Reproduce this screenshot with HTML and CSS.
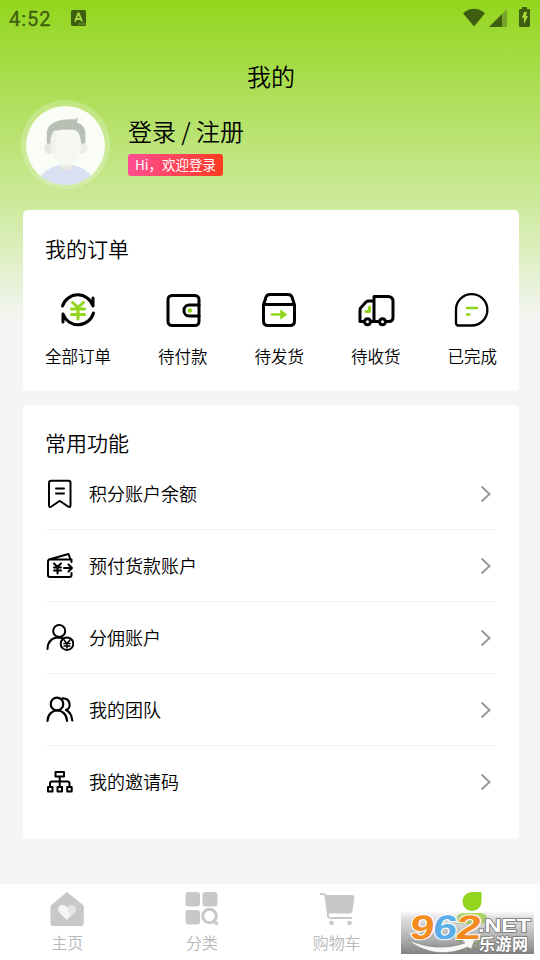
FILE: index.html
```html
<!DOCTYPE html>
<html lang="zh-CN">
<head>
<meta charset="utf-8">
<title>我的</title>
<link rel="stylesheet" href="styles.css">
</head>
<body>
<div class="screen">
  <header class="status">
    <span class="clock">4:52</span>
    <svg class="status-app" width="15" height="16" viewBox="0 0 15 16"><rect width="15" height="16" rx="1.5" fill="#3f5f10"/><path d="M4 11.5 7.2 3.5h.6L11 11.5M5.2 9h4.6" fill="none" stroke="#a3dc3e" stroke-width="1.8"/><path d="M8 14h1.3M10.3 14h1.3M12.5 14h1.3" stroke="#a3dc3e" stroke-width="1.2"/></svg>
    <svg class="status-icons" width="68" height="21" viewBox="0 0 68 21"><path d="M0 6.2Q11-2.5 22 6.2L11 19.5Z" fill="#3f5f10"/><path d="M26 20 39 7V20Z" fill="#3f5f10"/><path d="M39 7 44 2V20H39Z" fill="#76a42a"/><path d="M59 0h5v2h2a1 1 0 0 1 1 1v16a1 1 0 0 1-1 1h-9a1 1 0 0 1-1-1V3a1 1 0 0 1 1-1h2Z" fill="#3f5f10"/><path d="M61 5h3l-1 4h2l-4 8v-6h-2Z" fill="#a0da36"/></svg>
  </header>
  <h1 class="title">我的</h1>
  <section class="profile">
    <div class="avatar">
      <svg width="80" height="80" viewBox="0 0 80 80"><defs><clipPath id="face"><circle cx="40" cy="40" r="40"/></clipPath></defs><circle cx="40" cy="40" r="40" fill="#fafdf5"/><g clip-path="url(#face)"><path d="M14 72Q22 62 33 60H48Q60 62 67 72L60 80H20Z" fill="#d9e0f2"/><path d="M34 54h13v9q-6.500 5-13 0Z" fill="#e6e8e1"/><circle cx="24" cy="43" r="5.500" fill="#e5e8e1"/><circle cx="57" cy="43" r="5.500" fill="#eceee8"/><path d="M21 38V26Q22 19 31 15.500 36 13 50 13.500L52 11V17Q59 19 60 26V38H54L46 24H34L26 38Z" fill="#babfb5"/><path d="M25 39V34Q26 25 31 24.500 36 26 41 25 48 23 51 25 55 27 56 39 54 60 41 60.500 28 60 25 39Z" fill="#f6f8f3"/><path d="M25 39V34Q26 28 30 26V54Q26 48 25 39Z" fill="#eff2eb"/></g></svg>
    </div>
    <div class="who">
      <div class="login">登录 / 注册</div>
      <div class="welcome">Hi，欢迎登录</div>
    </div>
  </section>

  <section class="card orders">
    <h2>我的订单</h2>
    <div class="order-list">
      <div class="order"><svg width="36" height="36" viewBox="0 0 36 36"><g class="ln"><path d="M2.500 14A16 16 0 0 1 33 14V6M33.500 21A16 16 0 0 1 3 22V30"/></g><path class="gr heavy" d="m12.500 10.500 5.500 5 5.500-5M11.500 17h13M11.500 22.500h13M18 16v11"/></svg><span>全部订单</span></div>
      <div class="order"><svg width="36" height="36" viewBox="0 0 36 36"><g class="ln"><rect x="3" y="3.500" width="31" height="30" rx="4"/><path d="M34 13h-10a5 5 0 0 0-5 5v1a5 5 0 0 0 5 5h10"/></g><circle cx="25" cy="18.500" r="2.300" fill="#91d51c"/></svg><span>待付款</span></div>
      <div class="order"><svg width="36" height="36" viewBox="0 0 36 36"><g class="ln"><path d="M2.500 13 5 5q1-2.500 4-2.500H27q3 0 4 2.500l2.500 8v16q0 4.500-4.500 4.500H7q-4.500 0-4.500-4.500ZM2.500 12.500h31"/></g><path class="gr" d="M11 22.500h13"/><path d="m20 18.500 5 4-5 4Z" fill="#91d51c" stroke="#91d51c" stroke-width="1.500" stroke-linejoin="round"/></svg><span>待发货</span></div>
      <div class="order"><svg width="38" height="36" viewBox="0 0 38 36"><g class="ln"><path d="M6 29.500H3V18q0-2 1.500-3L9 10Q10 9 12 9H17V29.500H14M17 29.500V4.500H31q5 0 5 5V25q0 4.500-4 4.500H29M14 29.500h7"/><circle cx="10.500" cy="29.800" r="3"/><circle cx="25.500" cy="29.800" r="3"/></g><path class="gr heavy" d="M12.500 15V19.500H9"/></svg><span>待收货</span></div>
      <div class="order"><svg width="36" height="36" viewBox="0 0 36 36"><path class="ln thin" d="M2 18A15.700 15.700 0 1 1 17.700 33.500H4.500Q2 33.500 2 31Z"/><path class="gr" d="M13 16h10M13 22.500h2.500"/></svg><span>已完成</span></div>
    </div>
  </section>

  <section class="card features">
    <h2>常用功能</h2>
    <div class="row"><svg class="ic" width="28" height="30" viewBox="0 0 28 30"><path d="M3 27V4q0-2.200 2.200-2.200H22.300q2.200 0 2.200 2.200V26q0 3-2.500 1.500L14.700 22.500q-1-.8-2 0L5.500 27.500Q3 29 3 26.500M10 9.500h8M10 14.500h8"/></svg><span>积分账户余额</span><svg class="chev" width="11" height="18" viewBox="0 0 11 18"><path d="m1.500 1.500 8 7.500-8 7.500"/></svg></div>
    <div class="row"><svg class="ic" width="28" height="30" viewBox="0 0 28 30"><path d="M25.500 11V8.500H4Q2 8.500 2 10.500V24q0 2 2 2H23.500q2 0 2-2V22M3 8.500 22.500 3 24.500 8.500M8 12.500l3.500 3.500L15 12.500M8 16.500h7M8 19.500h7M11.500 16v6.500M18 17h8M22.500 13.500l3.500 3.500-3.500 3.500"/></svg><span>预付货款账户</span><svg class="chev" width="11" height="18" viewBox="0 0 11 18"><path d="m1.500 1.500 8 7.500-8 7.500"/></svg></div>
    <div class="row"><svg class="ic" width="28" height="30" viewBox="0 0 28 30"><circle cx="13.200" cy="8" r="6"/><path d="M1.500 26Q2 15 12 14.500q3 0 5 1"/><circle cx="21" cy="20.700" r="6.300"/><path d="m18 17 3 3.500L24 17M18 20.500h6M18 23h6M21 20v5" stroke-width="1.500"/></svg><span>分佣账户</span><svg class="chev" width="11" height="18" viewBox="0 0 11 18"><path d="m1.500 1.500 8 7.500-8 7.500"/></svg></div>
    <div class="row"><svg class="ic" width="28" height="30" viewBox="0 0 28 30"><path stroke-width="2.200" d="M1.500 26C2 12 20.500 12 21 26M16.500 3.300C25 3 25.500 13.500 20 15q5.500 2.500 6.300 10.500"/><circle cx="11" cy="9" r="6.300" stroke-width="2.200"/></svg><span>我的团队</span><svg class="chev" width="11" height="18" viewBox="0 0 11 18"><path d="m1.500 1.500 8 7.500-8 7.500"/></svg></div>
    <div class="row"><svg class="ic" width="28" height="30" viewBox="0 0 28 30"><path d="M9.500 5h8.500v4.500H9.500ZM13.700 10v10M4 20v-3.500q0-2 2-2H21.500q2 0 2 2V20M2 20h4.500v4.500H2ZM11.500 20H16v4.500h-4.500ZM21.200 20h4.500v4.500h-4.500Z"/></svg><span>我的邀请码</span><svg class="chev" width="11" height="18" viewBox="0 0 11 18"><path d="m1.500 1.500 8 7.500-8 7.500"/></svg></div>
  </section>

  <nav class="tabs">
    <div class="tab"><svg width="36" height="36" viewBox="0 0 36 36"><path d="M18 1 34 14q.8.800.800 2V32q0 3-3 3H4.500q-3 0-3-3V16q0-1.200 1-2Z" fill="#c8c8c8"/><path d="M18 29 10.500 21.500C6 15 14 11 18 16.500 22 11 30 15 26 21.500Z" fill="#e4e4e4"/><path d="M18 16.500C14 11 6 15 10.500 21.500L18 29l3.500-5Z" fill="#f4f4f4"/></svg><span>主页</span></div>
    <div class="tab"><svg width="36" height="36" viewBox="0 0 36 36"><g fill="#c8c8c8"><rect x="1.500" y="1" width="14.500" height="14.500" rx="3"/><rect x="18.500" y="1" width="15" height="14.500" rx="3"/><rect x="1.500" y="19" width="14.500" height="14.500" rx="3"/></g><circle cx="25.500" cy="25" r="6.800" fill="none" stroke="#c8c8c8" stroke-width="3"/><path d="m30 30 2.500 2.500" stroke="#c8c8c8" stroke-width="3.500" stroke-linecap="round"/></svg><span>分类</span></div>
    <div class="tab"><svg width="36" height="36" viewBox="0 0 36 36"><path d="M6 4H33Q35.500 4 35.300 7L33.500 20q-.5 2.500-3 2.500H9Z" fill="#c8c8c8"/><path d="M1 3H4.500Q6 3 6.500 5L9 23Q8 27 12 27H33" fill="none" stroke="#c8c8c8" stroke-width="2"/><circle cx="12.500" cy="32" r="2.300" fill="#c8c8c8"/><circle cx="30.500" cy="32" r="2.300" fill="#c8c8c8"/></svg><span>购物车</span></div>
    <div class="tab active"><svg width="36" height="36" viewBox="0 0 36 36"><path d="M18 1h9.500v9.500A9.500 9.500 0 1 1 18 1Z" fill="#91d51c"/><path d="M3 33V28q0-6 6-6H27q6 0 6 6-1 5-6 5Z" fill="#91d51c" opacity=".7"/></svg><span>我的</span></div>
  </nav>
  <div class="watermark">
    <svg width="133" height="53" viewBox="0 -10 133 53"><defs><linearGradient id="shade" x2="0" y2="1"><stop stop-color="#999" stop-opacity="0"/><stop offset=".15" stop-color="#999" stop-opacity=".3"/><stop offset="1" stop-color="#707070" stop-opacity=".88"/></linearGradient></defs><rect width="133" height="43" fill="url(#shade)"/>
    <path d="M7 29Q37 42 64 32L61 29 75 26 70 38 67 36Q34 50 7 29Z" fill="#f8f8f8" stroke="#888" stroke-width=".5"/>
    <g class="digits" transform="translate(0 27.500) skewX(-7)"><text x="8" y="0" textLength="24" lengthAdjust="spacingAndGlyphs" fill="#f58a1f">9</text><text x="31" y="0" textLength="24" lengthAdjust="spacingAndGlyphs" fill="#5aaee8">6</text><text x="54" y="0" textLength="25" lengthAdjust="spacingAndGlyphs" fill="#f58a1f">2</text></g>
    <text class="net" x="77" y="21" textLength="53" lengthAdjust="spacingAndGlyphs">.NET</text><text class="cn" x="78" y="38.500" textLength="49">乐游网</text></svg>
  </div>
</div>
</body>
</html>
```
FILE: styles.css
```css
* { box-sizing: border-box; }
body { margin: 0; font-family: "Noto Sans CJK SC", sans-serif; font-weight: 350; color: #000; }
.screen { position: relative; width: 540px; height: 960px; overflow: hidden; display: flex; flex-direction: column; background: linear-gradient(180deg, #93d61d 0, #acde55 90px, #cdea9c 205px, #f5f5f5 322px) #f5f5f5; }
.status { height: 53px; padding: 7px 9px 0 9px; display: flex; align-items: flex-start; }
.clock { font: 400 20px/25px Roboto, sans-serif; color: #3f5f10; letter-spacing: 1px; width: 62px; -webkit-text-stroke: .3px #3f5f10; }
.status-app { margin-top: 3px; }
.status-icons { margin-left: auto; }
.title { margin: 0; height: 47px; font-size: 24px; line-height: 46px; font-weight: inherit; text-align: center; padding-left: 2px; }
.profile { height: 110px; padding-left: 21px; display: flex; }
.avatar { width: 89px; height: 89px; border-radius: 50%; padding: 5px; background: rgba(255,255,255,.22); }
.avatar svg { display: block; width: 79px; height: 79px; margin-top: 1px; }
.who { margin-left: 18px; padding-top: 14px; }
.login { font-size: 24px; line-height: 34px; white-space: nowrap; }
.welcome { margin-top: 6px; width: 95px; height: 22px; border-radius: 3px; text-align: center; font-size: 13.500px; line-height: 21px; color: #fff; font-weight: 400; white-space: nowrap; background: linear-gradient(90deg, #ff4e91, #ff3b22); }
.card { flex: none; margin: 0 21px 14px 23px; padding: 0 22px; border-radius: 5px; background: #fff; }
.card h2 { margin: 0; font-size: 21px; font-weight: inherit; line-height: 30px; }
.orders { height: 181px; padding-top: 23px; }
.order-list { display: flex; justify-content: space-between; padding-top: 29px; }
.order { display: flex; flex-direction: column; align-items: center; font-size: 16.500px; line-height: 24px; }
.order svg { display: block; margin-bottom: 16px; }
.ln { fill: none; stroke: #000; stroke-width: 3; stroke-linejoin: round; stroke-linecap: round; }
.thin { stroke-width: 2.300; }
.gr { fill: none; stroke: #91d51c; stroke-width: 2.600; stroke-linecap: round; stroke-linejoin: round; }
.heavy { stroke-width: 3; }
.features { height: 434px; padding-top: 22px; }
.features h2 { height: 31px; }
.row { height: 72px; display: flex; align-items: center; border-bottom: 1px solid #f3f3f3; font-size: 18px; }
.row span { margin-top: -1px; }
.row:last-child { border-bottom-color: transparent; }
.ic { margin-left: 1px; margin-right: 15px; fill: none; stroke: #000; stroke-width: 2; stroke-linejoin: round; stroke-linecap: round; }
.chev { margin: 0 6px 0 auto; fill: none; stroke: #999; stroke-width: 2; }
.tabs { margin-top: auto; height: 76px; display: grid; grid-template-columns: repeat(4, 1fr); background: #fff; padding-right: 1px; }
.tab { display: flex; flex-direction: column; align-items: center; padding-top: 7px; font-size: 16px; line-height: 24px; color: #b8b8b8; }
.tab svg { display: block; margin-bottom: 3px; }
.tab.active { color: #91d51c; }
.watermark { position: absolute; left: 401px; top: 901px; width: 133px; height: 53px; }
.watermark svg { display: block; }
.digits { font: 900 34px "Liberation Sans", sans-serif; stroke: #fff; stroke-width: 2px; paint-order: stroke; }
.net { font: bold 18px "Liberation Sans", sans-serif; fill: #fff; stroke: #777; stroke-width: 1.500px; paint-order: stroke; }
.cn { font-size: 16px; font-weight: 700; fill: #fff; stroke: #777; stroke-width: 1.500px; paint-order: stroke; }
```
